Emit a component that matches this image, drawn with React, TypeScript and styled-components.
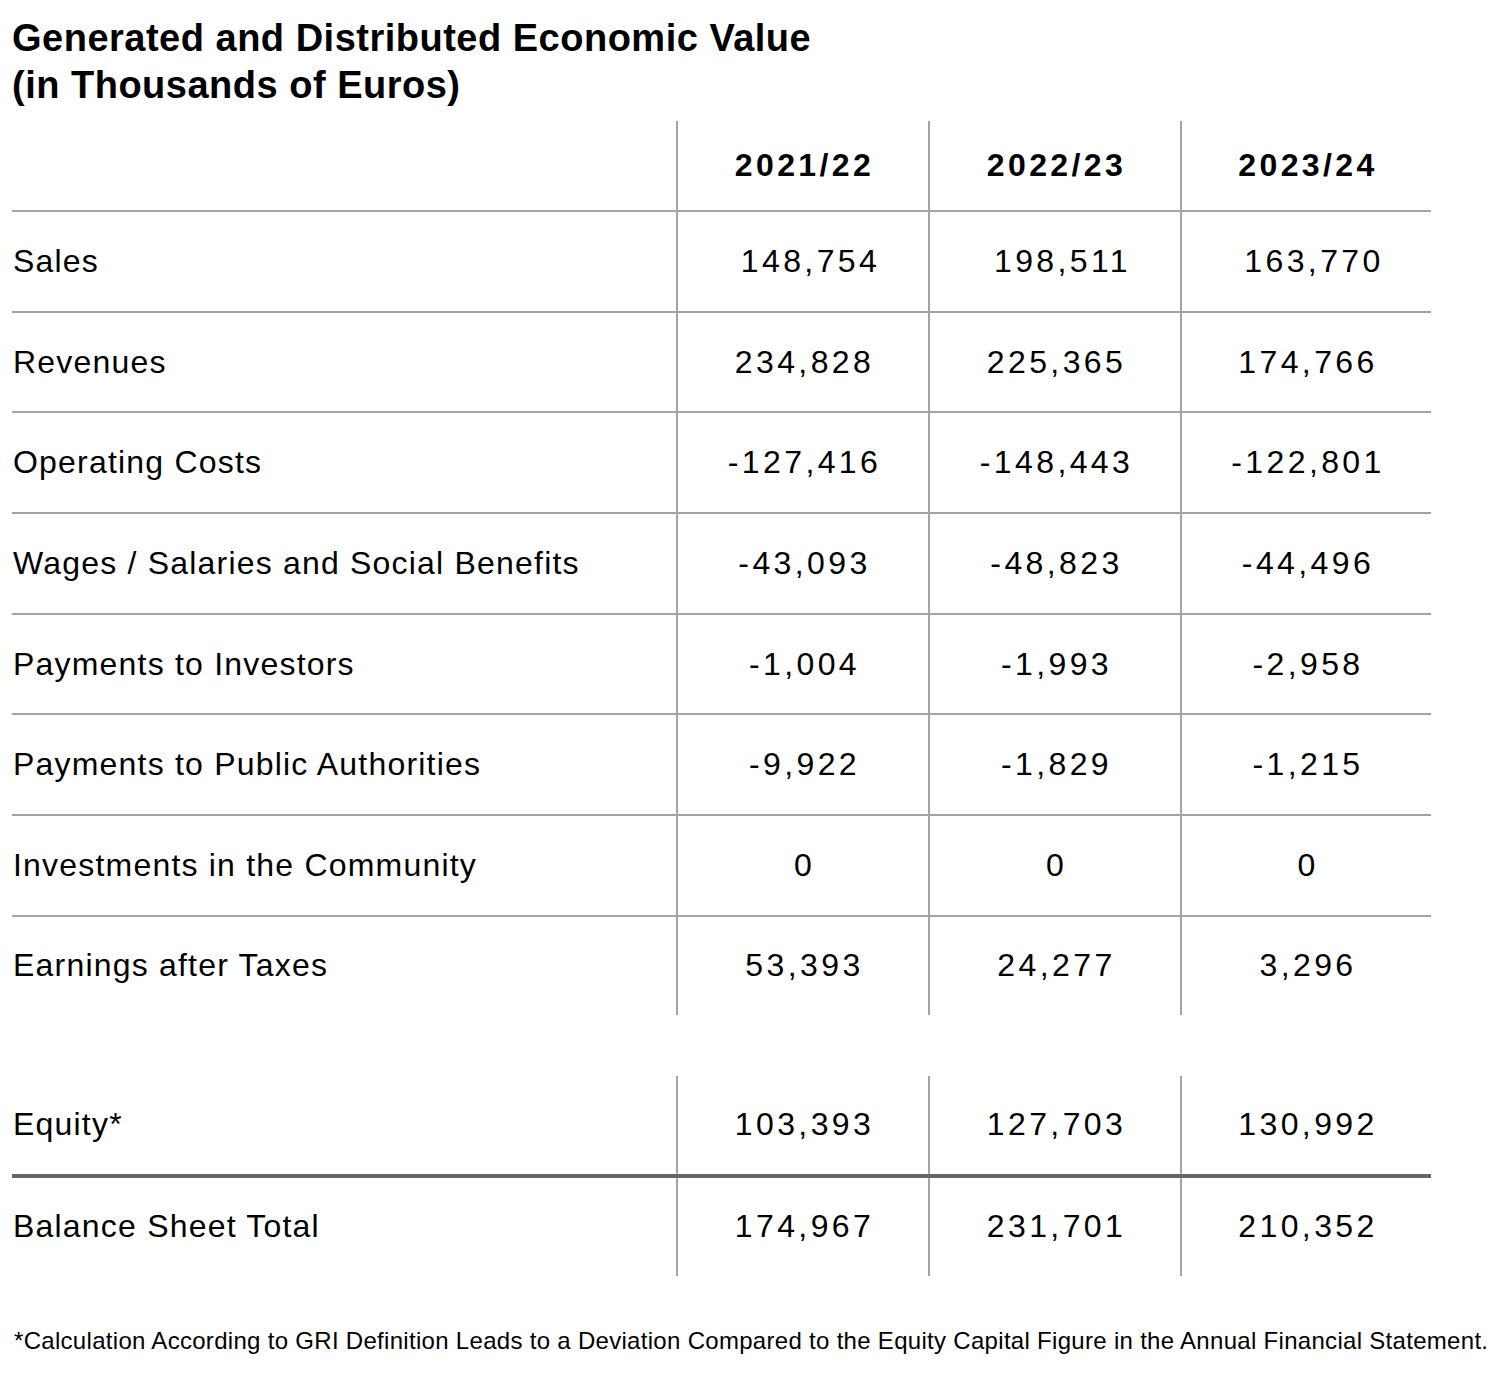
import React from "react";
import styled, { createGlobalStyle } from "styled-components";

const GlobalStyle = createGlobalStyle`
  html, body {
    margin: 0;
    padding: 0;
    background: #ffffff;
  }
  body {
    font-family: "Liberation Sans", Arial, sans-serif;
    color: #000000;
  }
`;

const Page = styled.div`
  width: 1502px;
  height: 1374px;
  box-sizing: border-box;
  padding: 15px 0 0 12px;
  display: flex;
  flex-direction: column;
`;

const Title = styled.h1`
  margin: 0;
  font-family: "Liberation Sans", Arial, sans-serif;
  font-weight: 700;
  font-size: 38px;
  line-height: 47px;
  letter-spacing: 0.5px;
  color: #000;
`;

const Table = styled.div<{ $gap?: number }>`
  width: 1419px;
  display: flex;
  flex-direction: column;
  margin-top: ${(p) => p.$gap ?? 0}px;
`;

type RowProps = { $height: number; $border?: "thin" | "thick" | "none" };

const Row = styled.div<RowProps>`
  display: grid;
  grid-template-columns: 664px 252px 252px 251px;
  height: ${(p) => p.$height}px;
  border-bottom: ${(p) =>
    p.$border === "thick"
      ? "4px solid #666666"
      : p.$border === "none"
      ? "0"
      : "2px solid #a3a3a3"};
`;

const Label = styled.div`
  display: flex;
  align-items: center;
  font-size: 32px;
  letter-spacing: 1.2px;
  padding-left: 1px;
`;

const Value = styled.div<{ $bold?: boolean; $shift?: number }>`
  display: flex;
  align-items: center;
  justify-content: center;
  border-left: 2px solid #a3a3a3;
  font-size: 32px;
  font-weight: ${(p) => (p.$bold ? 700 : 400)};
  letter-spacing: 3.4px;
  padding-left: ${(p) => 3 + (p.$shift ?? 0)}px;
`;

const Footnote = styled.p`
  margin: 50px 0 0 2px;
  font-size: 24px;
  line-height: 30px;
  letter-spacing: 0.3px;
  white-space: nowrap;
`;

type DataRow = { label: string; values: string[]; shift?: number };

const mainRows: DataRow[] = [
  { label: "Sales", values: ["148,754", "198,511", "163,770"], shift: 12 },
  { label: "Revenues", values: ["234,828", "225,365", "174,766"] },
  { label: "Operating Costs", values: ["-127,416", "-148,443", "-122,801"] },
  { label: "Wages / Salaries and Social Benefits", values: ["-43,093", "-48,823", "-44,496"] },
  { label: "Payments to Investors", values: ["-1,004", "-1,993", "-2,958"] },
  { label: "Payments to Public Authorities", values: ["-9,922", "-1,829", "-1,215"] },
  { label: "Investments in the Community", values: ["0", "0", "0"] },
  { label: "Earnings after Taxes", values: ["53,393", "24,277", "3,296"] },
];

const years = ["2021/22", "2022/23", "2023/24"];

export default function App() {
  return (
    <>
      <GlobalStyle />
      <Page>
        <Title>
          Generated and Distributed Economic Value
          <br />
          (in Thousands of Euros)
        </Title>
        <Table $gap={12}>
          <Row $height={89}>
            <Label />
            {years.map((y) => (
              <Value key={y} $bold>
                {y}
              </Value>
            ))}
          </Row>
          {mainRows.map((r, i) => (
            <Row
              key={r.label}
              $height={i === mainRows.length - 1 ? 98 : 98.7}
              $border={i === mainRows.length - 1 ? "none" : "thin"}
            >
              <Label>{r.label}</Label>
              {r.values.map((v, j) => (
                <Value key={j} $shift={r.shift}>
                  {v}
                </Value>
              ))}
            </Row>
          ))}
        </Table>
        <Table $gap={61}>
          <Row $height={98} $border="thick">
            <Label>Equity*</Label>
            {["103,393", "127,703", "130,992"].map((v) => (
              <Value key={v}>{v}</Value>
            ))}
          </Row>
          <Row $height={98} $border="none">
            <Label>Balance Sheet Total</Label>
            {["174,967", "231,701", "210,352"].map((v) => (
              <Value key={v}>{v}</Value>
            ))}
          </Row>
        </Table>
        <Footnote>
          *Calculation According to GRI Definition Leads to a Deviation Compared to the Equity
          Capital Figure in the Annual Financial Statement.
        </Footnote>
      </Page>
    </>
  );
}
